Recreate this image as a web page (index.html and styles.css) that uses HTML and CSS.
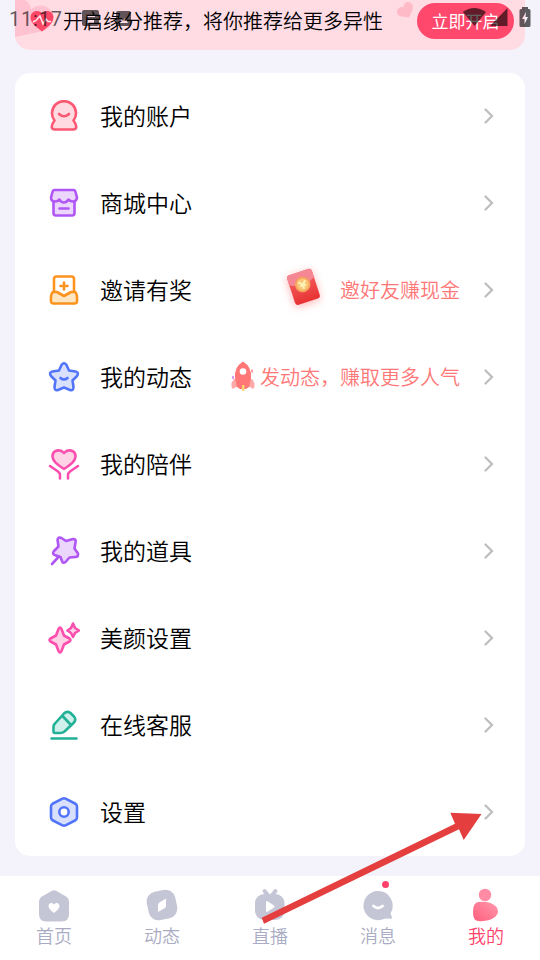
FILE: index.html
```html
<!DOCTYPE html>
<html lang="zh-CN">
<head>
<meta charset="utf-8">
<title>我的</title>
<link rel="stylesheet" href="styles.css">
</head>
<body>
<div class="screen">
  <section class="banner">
    <svg class="banner-deco" width="60" height="38" viewBox="0 0 60 38"><path d="M0 0H10Q15 3 16 9Q24 3 32 7Q41 13 37 22Q35 29 28 31L0 37Z" fill="#ffb9c9" opacity=".75"/></svg>
    <svg class="banner-heart" width="24" height="22" viewBox="0 0 24 22"><path d="M12 21.500C6 17 .5 12.500 .5 7.500C.5 3.500 3.500 1 7 1C9.500 1 11 2 12 3.500C13 2 14.500 1 17 1C20.500 1 23.500 3.500 23.500 7.500C23.500 12.500 18 17 12 21.500Z" fill="#ff4868"/><path d="M3 12L6 10.500L10 6L13 14L16 9L18 11.500H21" fill="none" stroke="#ffe5ea" stroke-width="1.500"/></svg>
    <span class="banner-text">开启缘分推荐，将你推荐给更多异性</span>
    <svg class="banner-mini" width="18" height="18" viewBox="0 0 18 18"><path d="M13 16.500L5 15.500C-.5 14 -.5 7 5 6C6 5.800 7 6 7.500 6.500C7.500 2 11.500 -.5 15 2C18.500 5 16 10 15.500 11Z" fill="#ffb3c0"/></svg>
    <button class="banner-btn">立即开启</button>
  </section>

  <main class="card">
    <div class="row">
      <svg class="icon red" viewBox="0 0 32 32"><path d="M6.500 20.500A12 12 0 1 1 25.500 20.500Q29 25 28 28Q27.500 29.500 25.500 29.500H6.500Q4.500 29.500 4 28Q3 25 6.500 20.500Z"/><path class="line" d="M11 14Q16 18.500 21 14"/></svg>
      <span class="label">我的账户</span>
      <svg class="chevron" viewBox="0 0 10 16"><path d="M1.500 1.500L8 8L1.500 14.500"/></svg>
    </div>
    <div class="row">
      <svg class="icon purple" viewBox="0 0 32 32"><path d="M5.500 13H26.500V26Q26.500 28.500 24 28.500H8Q5.500 28.500 5.500 26Z"/><path d="M6.500 3H25.500Q27 3 27.500 5L29 10.500Q28.500 14.500 25 14.500Q22 14.500 20.500 12.500Q18.500 15.500 16 15.500Q13 15.500 11.500 12.500Q10 14.500 7 14.500Q3 14.500 3 10.500L4.500 5Q5 3 6.500 3Z"/><path class="line" d="M11.500 21.500H20.500"/></svg>
      <span class="label">商城中心</span>
      <svg class="chevron" viewBox="0 0 10 16"><path d="M1.500 1.500L8 8L1.500 14.500"/></svg>
    </div>
    <div class="row">
      <svg class="icon orange" viewBox="0 0 32 32"><path class="line" d="M6 18V5Q6 2.500 8.500 2.500H23.500Q26 2.500 26 5V18"/><path d="M5 18H9L16 22L23 18H27Q29.500 20 29 27Q29 29.500 26.500 29.500H5.500Q3 29.500 3 27Q2.500 20 5 18Z"/><path class="line" d="M16 8.500V15.500M12.500 12H19.500"/></svg>
      <span class="label">邀请有奖</span>
      <svg class="packet" viewBox="0 0 48 48"><defs><linearGradient id="pk" x2="0" y2="1"><stop stop-color="#f76868"/><stop offset="1" stop-color="#e73232"/></linearGradient></defs><g transform="rotate(-18 24 22)"><rect x="11.500" y="6.500" width="26" height="31" rx="3" fill="url(#pk)"/><path d="M11.500 9.500Q11.500 6.500 14.500 6.500H34.500Q37.500 6.500 37.500 9.500V16Q24 24 11.500 16Z" fill="#f58794"/><circle cx="24.500" cy="19.500" r="7.800" fill="#f6a25e"/><circle cx="24.500" cy="19.500" r="6" fill="#f9c675"/><path d="M21 16L24.500 20L28 16M24.500 20V24M21.500 20.500H27.500" fill="none" stroke="#fff2b8" stroke-width="2"/></g></svg>
      <span class="hint">邀好友赚现金</span>
      <svg class="chevron" viewBox="0 0 10 16"><path d="M1.500 1.500L8 8L1.500 14.500"/></svg>
    </div>
    <div class="row">
      <svg class="icon blue" viewBox="0 0 32 32"><path d="M13.500 4Q16 .5 18.500 4L21 9.500L27.500 10.500Q31.500 11.500 29 15L24.500 19.500L25.500 26Q25.500 30 22 29L16 26.500L10 29Q6.500 30 6.500 26L7.500 19.500L3 15Q.5 11.500 4.500 10.500L11 9.500Z"/><path class="line" d="M12.500 17Q16 20 19.500 17"/></svg>
      <span class="label">我的动态</span>
      <svg class="rocket" viewBox="0 0 32 32"><path d="M7 19L4.500 23V27L6 29L9 27H23L26 29L27.500 27V23L25 19Z" fill="#ffaaa8"/><path d="M16 1.500Q7 7 8 18L10 27L13 29H19L22 27L24 18Q25 7 16 1.500Z" fill="#ff7776"/><circle cx="16" cy="11.500" r="3.300" fill="#fff"/><path d="M15 25H17.500V31H15Z" fill="#ffd36e"/><path d="M5 16H7V19H5Z" fill="#d99cf5"/><path d="M24 9.500H26V12.500H24Z" fill="#ff9c9b"/></svg>
      <span class="hint">发动态，赚取更多人气</span>
      <svg class="chevron" viewBox="0 0 10 16"><path d="M1.500 1.500L8 8L1.500 14.500"/></svg>
    </div>
    <div class="row">
      <svg class="icon pink" viewBox="0 0 32 32"><path d="M16 21Q4.500 14 4.500 8.500C4.500 2 12 .5 16 5C20 .5 27.500 2 27.500 8.500Q27.500 14 16 21Z"/><path class="line" d="M2 18L10 23.500Q12 25 12 27V30.500M30 18L22 23.500Q20 25 20 27V30.500"/></svg>
      <span class="label">我的陪伴</span>
      <svg class="chevron" viewBox="0 0 10 16"><path d="M1.500 1.500L8 8L1.500 14.500"/></svg>
    </div>
    <div class="row">
      <svg class="icon purple" viewBox="0 0 32 32"><path class="line" d="M4 29L10 22.500"/><path d="M9.500 5Q10 1.500 13.500 3L18 6L25 4Q28.500 4 27.500 7.500L26.500 13.500L30 18.500Q30.500 22 27.500 22L21.500 22.500L17.500 27Q15 29 14 26L12.500 22L6.500 20Q4 18.500 6 16L10.500 11.500Z"/></svg>
      <span class="label">我的道具</span>
      <svg class="chevron" viewBox="0 0 10 16"><path d="M1.500 1.500L8 8L1.500 14.500"/></svg>
    </div>
    <div class="row">
      <svg class="icon pink" viewBox="0 0 32 32"><path d="M10.500 7Q12 4 13.500 7L16 13.500L21.500 16.500Q23.500 18 21.500 19.500L16 22.500L13.500 29Q12 32 10.500 29L8 22.500L2.500 19.500Q.5 18 2.500 16.500L8 13.500Z"/><path d="M25 1.500L27 6L31 8.500L27 11L25 15L23 11L19.500 8.500L23 6Z"/></svg>
      <span class="label">美颜设置</span>
      <svg class="chevron" viewBox="0 0 10 16"><path d="M1.500 1.500L8 8L1.500 14.500"/></svg>
    </div>
    <div class="row">
      <svg class="icon green" viewBox="0 0 32 32"><path d="M5.500 22.500V17.500Q5.500 16 7 14.500L16 4.500Q19 1.500 22.500 4L26 7.500Q28.500 10.500 26 13.500L16.500 22.500Q14.500 24 12.500 24H7Q5.500 24 5.500 22.500Z"/><path class="line" d="M14.500 7L23 16M3.500 29.500H28.500"/></svg>
      <span class="label">在线客服</span>
      <svg class="chevron" viewBox="0 0 10 16"><path d="M1.500 1.500L8 8L1.500 14.500"/></svg>
    </div>
    <div class="row">
      <svg class="icon blue" viewBox="0 0 32 32"><path d="M14 2.800Q16 1.800 18 2.800L27 7.500Q29 8.500 29 10.500V21.500Q29 23.500 27 24.500L18 29.200Q16 30.200 14 29.200L5 24.500Q3 23.500 3 21.500V10.500Q3 8.500 5 7.500Z"/><circle class="inner" cx="16" cy="16" r="4.700"/></svg>
      <span class="label">设置</span>
      <svg class="chevron" viewBox="0 0 10 16"><path d="M1.500 1.500L8 8L1.500 14.500"/></svg>
    </div>
  </main>

  <nav class="tabs">
    <div class="tab"><svg viewBox="0 0 36 36"><path d="M15.500 3Q18 1.500 20.500 3L30 8.500Q33 10.500 33 14V26Q33 33.500 25.500 33.500H10.500Q3 33.500 3 26V14Q3 10.500 6 8.500Z"/><path class="cut" d="M18 25Q12.500 21 12.500 18C12.500 14.500 16.500 14 18 16.500C19.500 14 23.500 14.500 23.500 18Q23.500 21 18 25Z"/></svg><span>首页</span></div>
    <div class="tab"><svg viewBox="0 0 36 36"><rect x="3.500" y="2.500" width="29" height="29" rx="10" transform="rotate(-12 18 17)"/><path class="cut" d="M14 17Q14 15.500 15.500 14.500L22 10.500V18Q22 19 21 20L14 24Z"/></svg><span>动态</span></div>
    <div class="tab"><svg viewBox="0 0 36 36"><path class="ear" d="M12.500 3L17 8.500M23.500 3L19 8.500"/><rect x="3" y="6" width="29.500" height="26" rx="9"/><path class="cut" d="M14 14Q14 12.500 16 13.500L22 17.500Q23 18.500 22 19.500L16 23.500Q14 24.500 14 23Z"/></svg><span>直播</span></div>
    <div class="tab"><svg viewBox="0 0 36 36"><path d="M18 3A14.600 14.600 0 1 0 24.500 30.700Q27 30.500 31 30.800Q32.500 30.500 31.500 28L30.500 25.200A14.600 14.600 0 0 0 18 3Z"/><path class="mouth" d="M13.500 18Q18 22 22.500 18"/></svg><span>消息</span><i class="dot"></i></div>
    <div class="tab active"><svg viewBox="0 0 36 36"><defs><linearGradient id="me" x1="1" x2="0" y2="1"><stop stop-color="#ff99ad"/><stop offset="1" stop-color="#ff5f7e"/></linearGradient></defs><circle cx="17" cy="7" r="6.200" fill="#ff8ba4"/><path d="M10 14Q23 13 28.500 19Q32 24 27.500 28.500Q21 34 10 33Q5 32.500 5 24Q5 15 10 14Z" fill="url(#me)"/></svg><span>我的</span></div>
  </nav>

  <div class="status">
    <span class="clock">11:17</span>
    <svg class="notices" width="50" height="18" viewBox="0 0 50 18"><path fill-rule="evenodd" d="M2 0H15Q17 0 17 2V14Q17 16 15 16H2Q0 16 0 14V2Q0 0 2 0ZM4 5V7H13V5ZM5 10V13H12V10Z"/><path fill-rule="evenodd" d="M36 1H47Q49 1 49 3V14Q49 16 47 16H36Q34 16 34 14V3Q34 1 36 1ZM37 13H46L43 8L41 11L39 9Z"/></svg>
    <svg class="signals" width="70" height="22" viewBox="0 0 70 22"><path d="M0 5Q11 -3 23 5L11.500 19Z"/><path d="M44.500 1V19H27Z"/><path fill-rule="evenodd" d="M59 2V0H65V2H66Q67.500 2 67.500 3.500V18.500Q67.500 20 66 20H58Q56.500 20 56.500 18.500V3.500Q56.500 2 58 2ZM63 5L59 12H61.500V17L65 10H62.500Z"/></svg>
  </div>
  <svg class="pointer" width="224" height="114" viewBox="0 0 224 114"><path d="M.7 105.700L194 11.700L189.300 .7L220.500 2L202.700 28L198 17.300L3 111.700Z" fill="#e43e3e"/></svg>
</div>
</body>
</html>
```
FILE: styles.css
```css
* { box-sizing: border-box; }
body {
  margin: 0;
  background: #f4f2fb;
  font-family: "Noto Sans CJK SC", sans-serif;
  font-weight: 350;
  color: #000;
}
.screen {
  position: relative;
  width: 540px;
  height: 960px;
  overflow: hidden;
  display: flex;
  flex-direction: column;
}
.banner {
  position: relative;
  flex: none;
  height: 50px;
  margin: 0 15px 23px;
  padding: 0 11px 8px 15px;
  display: flex;
  align-items: center;
  background: #ffdbe4;
  border-radius: 0 0 15px 15px;
  overflow: hidden;
}
.banner-deco { position: absolute; left: 0; top: 0; }
.banner-heart { position: relative; flex: none; }
.banner-text { position: relative; margin-left: 9px; font-size: 20px; line-height: 30px; white-space: nowrap; }
.banner-mini { position: absolute; left: 381px; top: 1px; opacity: .8; }
.banner-btn {
  margin-left: auto;
  width: 97px;
  height: 36px;
  padding: 0;
  border: 0;
  border-radius: 18px;
  background: #ff486c;
  color: #fff;
  font: 400 17px/36px "Noto Sans CJK SC", sans-serif;
}
.card {
  flex: none;
  margin: 0 15px 20px;
  background: #fff;
  border-radius: 15px;
}
.row {
  height: 87px;
  padding: 0 31px 2px 33px;
  display: flex;
  align-items: center;
}
.icon {
  width: 32px;
  height: 32px;
  flex: none;
  stroke-width: 2.6;
  stroke-linecap: round;
  stroke-linejoin: round;
}
.icon .line { fill: none; }
.icon .inner { fill: #fff; }
.red { stroke: #fb5873; fill: #ffdbe1; }
.purple { stroke: #b056f5; fill: #ecd6fc; }
.orange { stroke: #fb931f; fill: #ffe6c3; }
.blue { stroke: #5274f8; fill: #d9e0fd; }
.pink { stroke: #fa4fae; fill: #ffd2e6; }
.green { stroke: #22b196; fill: #cff0eb; }
.label { margin: 0 auto 2px 20px; font-size: 23px; line-height: 34px; }
.hint { font-size: 20px; line-height: 30px; color: #ff7878; }
.packet { width: 48px; height: 48px; margin: 0 13px 2px 0; filter: drop-shadow(0 2px 4px #ffb5b5); }
.rocket { width: 32px; height: 32px; margin: 0 1px 2px 0; }
.chevron {
  width: 10px;
  height: 16px;
  margin-left: 24px;
  fill: none;
  stroke: #bdbdbd;
  stroke-width: 2.2;
  stroke-linecap: round;
}
.tabs {
  flex: 1;
  display: grid;
  grid-template-columns: repeat(5, 1fr);
  background: #fff;
}
.tab {
  position: relative;
  display: flex;
  flex-direction: column;
  align-items: center;
  padding-top: 12px;
  font-size: 18px;
  line-height: 22px;
  color: #aaacc3;
}
.tab svg { width: 36px; height: 36px; fill: #c4c5d5; }
.tab .cut { fill: #fff; }
.tab .ear { stroke: #c4c5d5; stroke-width: 4; stroke-linecap: round; }
.tab .mouth { fill: none; stroke: #fff; stroke-width: 3; stroke-linecap: round; }
.tab.active { color: #ff426b; }
.dot { position: absolute; left: 58px; top: 5px; width: 7px; height: 7px; border-radius: 50%; background: #ff426b; }
.status {
  position: absolute;
  inset: 0 0 auto;
  height: 36px;
  color: rgba(0, 0, 0, .62);
  fill: rgba(0, 0, 0, .62);
}
.clock { position: absolute; left: 9px; top: 7px; font: 400 20px/24px Roboto, sans-serif; letter-spacing: .8px; }
.notices { position: absolute; left: 82px; top: 10px; }
.signals { position: absolute; left: 463px; top: 7px; }
.pointer { position: absolute; left: 261px; top: 812px; }
```
